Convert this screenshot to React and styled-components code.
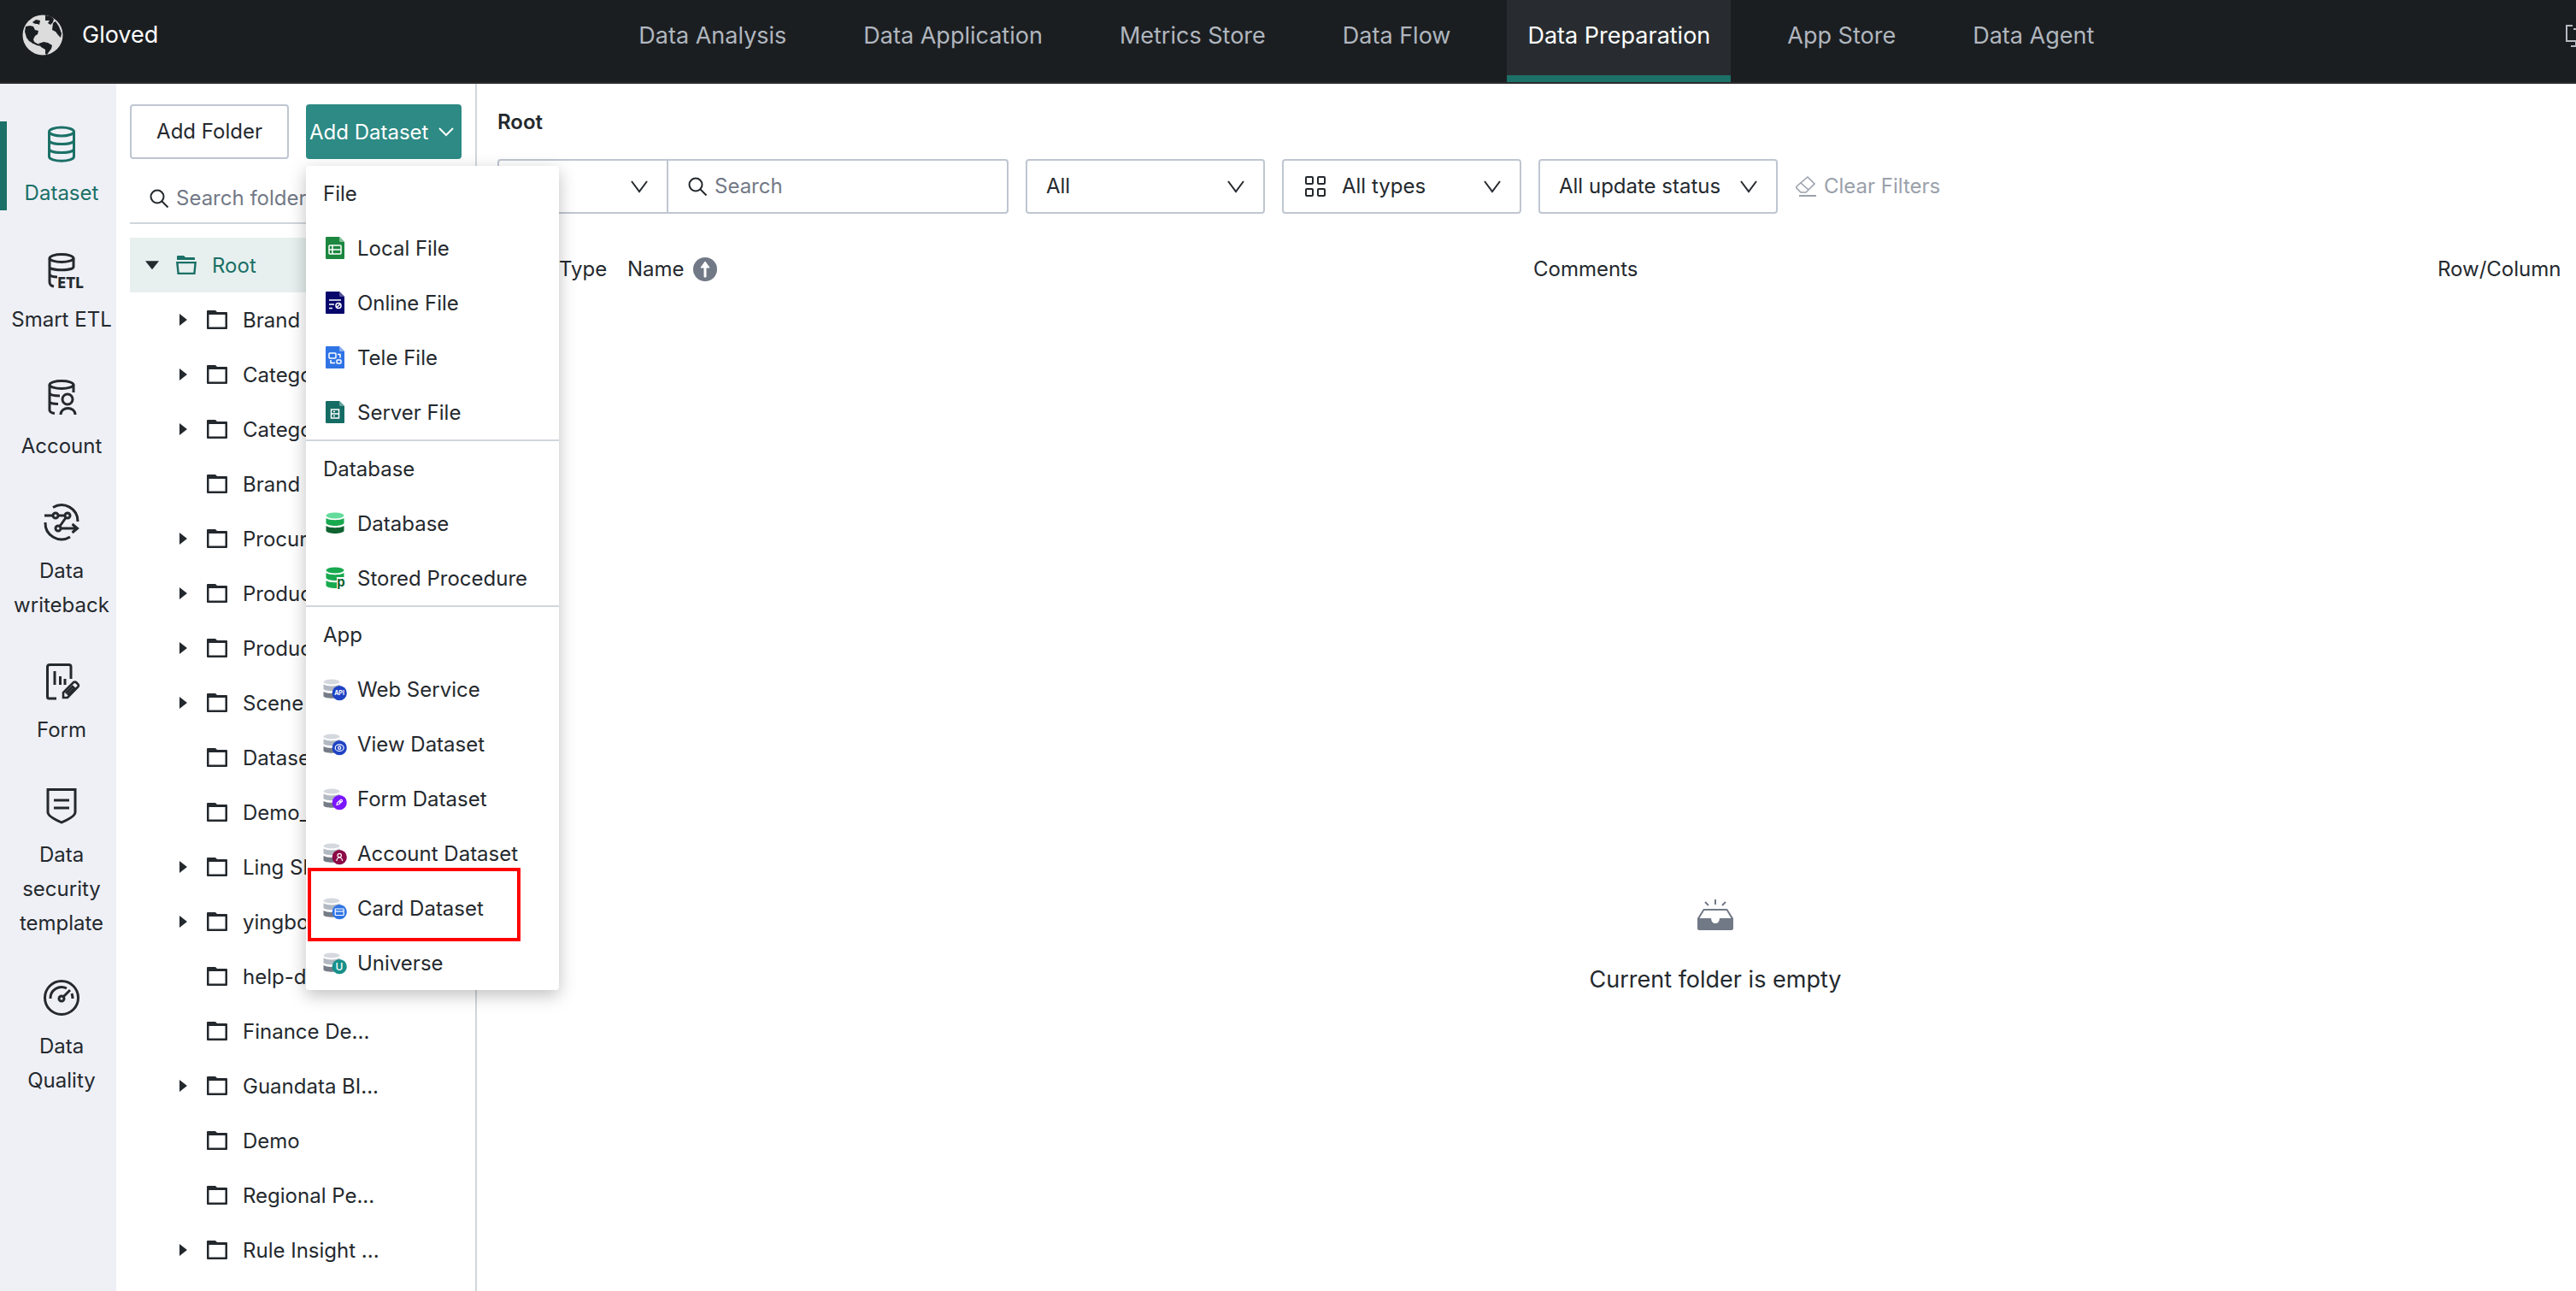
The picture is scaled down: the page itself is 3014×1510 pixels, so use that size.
import styled, { createGlobalStyle, css } from 'styled-components';
import { useState } from 'react';

const tabs = [
  'Data Analysis',
  'Data Application',
  'Metrics Store',
  'Data Flow',
  'Data Preparation',
  'App Store',
  'Data Agent',
];

const folders = [
  { name: 'Brand', open: true },
  { name: 'Category', open: true },
  { name: 'Category', open: true },
  { name: 'Brand' },
  { name: 'Procurement', open: true },
  { name: 'Product', open: true },
  { name: 'Product', open: true },
  { name: 'Scene', open: true },
  { name: 'Dataset' },
  { name: 'Demo_' },
  { name: 'Ling Sh', open: true },
  { name: 'yingbo', open: true },
  { name: 'help-d' },
  { name: 'Finance De...' },
  { name: 'Guandata BI...', open: true },
  { name: 'Demo' },
  { name: 'Regional Pe...' },
  { name: 'Rule Insight ...', open: true },
];

/* ---------- small icons ---------- */

const Chevron = ({ flat }) => (
  <svg width="20" height="20" viewBox="0 0 20 20" fill="none" stroke="currentColor" strokeWidth="2">
    <path d={flat ? 'M2 5l8 8 8-8' : 'M1 4l9 12 9-12'} />
  </svg>
);

const SearchIcon = () => (
  <svg width="24" height="24" viewBox="0 0 24 24" fill="none" stroke="#24292e" strokeWidth="2">
    <circle cx="10" cy="10" r="7.5" />
    <path d="M15.500 15.500l7 7" />
  </svg>
);

const GridIcon = () => (
  <svg width="26" height="26" viewBox="0 0 26 26" fill="none" stroke="#24292e" strokeWidth="2">
    <rect x="2" y="2" width="8" height="8" rx="1" />
    <rect x="16" y="2" width="8" height="8" rx="1" />
    <rect x="2" y="16" width="8" height="8" rx="1" />
    <rect x="16" y="16" width="8" height="8" rx="1" />
  </svg>
);

const EraserIcon = () => (
  <svg width="26" height="26" viewBox="0 0 26 26" fill="none" stroke="currentColor" strokeWidth="1.6">
    <path d="M15 2l8 8-10 10H7l-5-5v-2zM7 9l9 8" />
    <path d="M5 24h20" strokeWidth="2" />
  </svg>
);

const FolderIcon = () => (
  <svg width="24" height="22" viewBox="0 0 24 22">
    <path d="M0 1q0-1 1-1h9l2 2h11q1 0 1 1v18q0 1-1 1H1q-1 0-1-1zM2.500 5v14.500h19V5z" fill="#24292e" fillRule="evenodd" />
  </svg>
);

const FolderOpenIcon = () => (
  <svg width="24" height="22" viewBox="0 0 24 22" fill="#1b7067">
    <path d="M1 1q0-1 1-1h7l2 2h10q1 0 1 1v2H1z" />
    <path d="M0 7h24l-1.500 15h-21zM2.700 9.200l1 10.600h16.600l1-10.600z" fillRule="evenodd" />
  </svg>
);

const GlobeIcon = () => (
  <svg width="48" height="50" viewBox="0 0 48 50">
    <circle cx="24" cy="25" r="23.5" fill="#dcdcdc" />
    <g fill="#1b1e21">
      <path d="M4 15l5-1 4 1 2 4 4 1-1 4-3 2-2 4 1 3 3 2-4 0-5-3-3-4-2-7z" />
      <path d="M12 10l4-3 5 1-1 5-2-1-2 0-3-1z" />
      <path d="M27 2l6 1 4 3-1 4-3 3-3-2 2-3-5 0z" />
      <path d="M36 11l3-2 4 6 3 8-1 5-3-3-3-4-4-2z" />
      <path d="M19 35l6-2 5 1 5 3-1 4-3 4-2 3-2-1 0-5-5-3z" />
      <path d="M11 31l4 3 5 2 1 2-4-1-6-3z" />
    </g>
  </svg>
);

const MonitorIcon = () => (
  <svg width="28" height="28" viewBox="0 0 28 28" fill="none" stroke="#b5bac2" strokeWidth="2">
    <path d="M9 2H2v18h24V2h-7M10 6h8M13 20v6M7 26h14" />
  </svg>
);

const SortIcon = () => (
  <svg width="28" height="28" viewBox="0 0 28 28">
    <circle cx="14" cy="14" r="14" fill="#727986" />
    <path d="M14 5l5 7h-4v11h-2V12H9z" fill="#fff" stroke="#fff" />
  </svg>
);

const EmptyIcon = () => (
  <svg width="42" height="36" viewBox="0 0 42 36" fill="#727986">
    <path d="M7 11h28l7 11v12q0 2-2 2H2q-2 0-2-2V22zM8 13L2.500 22H16q.5 6 5 6t5-6h13.500L34 13z" fillRule="evenodd" />
    <path d="M21 0v6M9 3l4 4M33 3l-4 4" stroke="#727986" strokeWidth="2" />
  </svg>
);

/* ---------- sidebar icons, artwork sits on the bottom edge ---------- */

const SideSvg = ({ height, children }) => (
  <svg
    width="48"
    height={height}
    viewBox={`0 ${44 - height} 48 ${height}`}
    fill="none"
    stroke="currentColor"
    strokeWidth="3"
    overflow="visible"
  >
    {children}
  </svg>
);

const EtlText = styled.text`
  font-family: 'Liberation Sans Narrow', 'DejaVu Sans Condensed', sans-serif;
  font-weight: 700;
  font-size: 17px;
  fill: currentColor;
  stroke: none;
`;

const side = [
  {
    label: 'Dataset',
    icon: (
      <SideSvg height={44}>
        <ellipse cx="24" cy="8" rx="14.5" ry="5" />
        <path d="M9.500 8v29c0 7 29 7 29 0V8M9.500 18c0 6 29 6 29 0M9.500 28c0 6 29 6 29 0" />
      </SideSvg>
    ),
  },
  {
    label: 'Smart ETL',
    icon: (
      <SideSvg height={44}>
        <ellipse cx="24" cy="8" rx="14" ry="4.5" />
        <path d="M10 8v28c0 3 2 4.500 5 5M10 18c0 5 28 5 28 0V8M10 27c1 2 4 3 9 3" />
        <EtlText x="19" y="43">
          ETL
        </EtlText>
      </SideSvg>
    ),
  },
  {
    label: 'Account',
    icon: (
      <SideSvg height={44}>
        <ellipse cx="24" cy="8" rx="14" ry="4.5" />
        <path d="M10 8v30q1 3 6 3.500M38 8v9M10 18c1 2 5 3 12 3M10 28c1 2 5 2.500 10 2.500" />
        <circle cx="31" cy="25" r="6" />
        <path d="M23 43c0-10 17-10 17 0" />
      </SideSvg>
    ),
  },
  {
    label: 'Data writeback',
    icon: (
      <SideSvg height={42}>
        <path d="M14 5.500A19 19 0 0 1 43 22M5 23a19 19 0 0 0 29 17" />
        <circle cx="17" cy="15" r="3" />
        <circle cx="31" cy="15" r="3" />
        <circle cx="20" cy="30" r="3" />
        <path d="M4 15h10M20 15h8M29 17.500L22 27.500M23 30h18M36.500 25l6 5-6 5" />
      </SideSvg>
    ),
  },
  {
    label: 'Form',
    icon: (
      <SideSvg height={42}>
        <path d="M35 20V6q0-2.500-2.500-2.500h-22Q7.500 3.500 7.500 6v35q0 2 2 2H18M16 11v16M22.500 17v10M28 20v7" />
        <path d="M26 42v-6l12-12q2-1 3.500.5l2 2q1 1.500 0 2.500L31 42zM29 37l8-8 2 2-8 8" strokeWidth="2.600" />
      </SideSvg>
    ),
  },
  {
    label: 'Data security template',
    icon: (
      <SideSvg height={42}>
        <path d="M8 3.500h32V30q0 5-16 12Q8 35 8 30zM15 16h18M15 25h18" />
      </SideSvg>
    ),
  },
  {
    label: 'Data Quality',
    icon: (
      <SideSvg height={40}>
        <circle cx="24" cy="23" r="19.5" />
        <circle cx="24" cy="24" r="3" />
        <path d="M11 24a13 13 0 0 1 19-12M26.500 21.500L34 14M36 18q1 3 1 6" />
      </SideSvg>
    ),
  },
];

/* ---------- menu icons ---------- */

const FileIcon = ({ color, fold, children }) => (
  <svg width="28" height="28" viewBox="0 0 28 28">
    <path d="M4 1h15l6 6v19q0 1-1 1H4q-1 0-1-1V2q0-1 1-1z" fill={color} />
    <path d="M19 1l6 6h-5q-1 0-1-1z" fill={fold} />
    <g fill="none" stroke="#fff" strokeWidth="1.5">
      {children}
    </g>
  </svg>
);

const Cylinder = ({ top, middle, bottom }) => (
  <>
    <ellipse cx="14" cy="5" rx="10.5" ry="3.5" fill={top} />
    <path d="M3.500 8c4 3 17 3 21 0v6c-2 4-19 4-21 0z" fill={middle} />
    <path d="M3.500 17c4 3 17 3 21 0v6c-2 4-19 4-21 0z" fill={bottom} />
  </>
);

const AppIcon = ({ color, children }) => (
  <svg width="28" height="28" viewBox="0 0 28 28">
    <ellipse cx="10" cy="5.500" rx="9.5" ry="3" fill="#d5d9df" />
    <path d="M.5 8.500c4 2.500 15 2.500 19 0v5.500c-2 3-17 3-19 0z" fill="#b3b9c2" />
    <path d="M.5 17c4 2.500 15 2.500 19 0v5.500c-2 3-17 3-19 0z" fill="#757c87" />
    <circle cx="19.2" cy="18.7" r="8.6" fill={color} />
    <g fill="none" stroke="#fff" strokeWidth="1.2">
      {children}
    </g>
  </svg>
);

const BadgeText = styled.text`
  font-family: Inter, sans-serif;
  font-weight: ${props => props.$weight || 700};
  font-size: ${props => props.$size || 7}px;
  text-anchor: middle;
  fill: ${props => props.$color || '#fff'};
  stroke: none;
`;

const menu = [
  {
    title: 'File',
    items: [
      {
        label: 'Local File',
        icon: (
          <FileIcon color="#1b873f" fold="#7fbf92">
            <rect x="7" y="11" width="14" height="10" rx="1" />
            <path d="M7 16h14M11 11v10" />
          </FileIcon>
        ),
      },
      {
        label: 'Online File',
        icon: (
          <FileIcon color="#06066b" fold="#55559c">
            <path d="M7 11h14M7 16h6M7 20.500h4" />
            <circle cx="18" cy="17.5" r="3" />
            <path d="M16 19.500l4-4" />
          </FileIcon>
        ),
      },
      {
        label: 'Tele File',
        icon: (
          <FileIcon color="#2f74e5" fold="#86aef0">
            <rect x="7" y="9" width="8" height="6" rx="1" />
            <rect x="16" y="17" width="5" height="4" rx="1" />
            <path d="M17 10.500h3v4M9 17v3.500h5" />
          </FileIcon>
        ),
      },
      {
        label: 'Server File',
        icon: (
          <FileIcon color="#146c64" fold="#5fa39c">
            <rect x="9.5" y="11" width="9" height="10" />
            <path d="M9.500 16h9M12 13.500h2M12 18.500h2" />
          </FileIcon>
        ),
      },
    ],
  },
  {
    title: 'Database',
    items: [
      {
        label: 'Database',
        icon: (
          <svg width="28" height="28" viewBox="0 0 28 28">
            <Cylinder top="#63dc9b" middle="#18a94f" bottom="#0f6330" />
          </svg>
        ),
      },
      {
        label: 'Stored Procedure',
        icon: (
          <svg width="28" height="28" viewBox="0 0 28 28">
            <Cylinder top="#18a94f" middle="#18a94f" bottom="#18a94f" />
            <path d="M16 13h10v15H16z" fill="#fff" />
            <BadgeText x="21" y="24" $size={15} $color="#0f6330">
              p
            </BadgeText>
          </svg>
        ),
      },
    ],
  },
  {
    title: 'App',
    items: [
      {
        label: 'Web Service',
        icon: (
          <AppIcon color="#1f43c4">
            <BadgeText x="19" y="21">API</BadgeText>
          </AppIcon>
        ),
      },
      {
        label: 'View Dataset',
        icon: (
          <AppIcon color="#1f43c4">
            <ellipse cx="19.2" cy="18.7" rx="5" ry="3.8" />
            <circle cx="19.2" cy="18.7" r="1.6" />
          </AppIcon>
        ),
      },
      {
        label: 'Form Dataset',
        icon: (
          <AppIcon color="#7b16ff">
            <path d="M16 21.500l.5-2.500 4-3.500q2-.5 2 1.500l-4 3.800zM19 19l2-2" />
          </AppIcon>
        ),
      },
      {
        label: 'Account Dataset',
        icon: (
          <AppIcon color="#8c0a48">
            <circle cx="19.2" cy="16.5" r="2.2" />
            <path d="M15.800 23q.5-4 3.400-4t3.400 4" />
          </AppIcon>
        ),
      },
      {
        label: 'Card Dataset',
        marked: true,
        icon: (
          <AppIcon color="#2f74e5">
            <rect x="14.2" y="15" width="10" height="7.5" rx=".5" />
            <path d="M14.200 18h10" />
          </AppIcon>
        ),
      },
      {
        label: 'Universe',
        icon: (
          <AppIcon color="#17908a">
            <BadgeText x="19" y="23" $size={12} $weight={500}>
              U
            </BadgeText>
          </AppIcon>
        ),
      },
    ],
  },
];

const App = () => {
  const [activeTab, setActiveTab] = useState('Data Preparation');
  const [menuOpen, setMenuOpen] = useState(true);

  return (
    <Page>
      <GlobalStyle />
      <Header>
        <Brand>
          <GlobeIcon />
          Gloved
        </Brand>
        <Nav>
          {tabs.map(tab => (
            <Tab
              key={tab}
              href="#"
              $active={tab === activeTab}
              onClick={() => setActiveTab(tab)}
            >
              {tab}
            </Tab>
          ))}
        </Nav>
        <HeaderButton aria-label="Screen">
          <MonitorIcon />
        </HeaderButton>
      </Header>
      <Body>
        <Sidebar>
          {side.map((item, i) => (
            <SideLink key={item.label} href="#" $active={i === 0}>
              {item.icon}
              <span>{item.label}</span>
            </SideLink>
          ))}
        </Sidebar>
        <TreePanel>
          <Actions>
            <PlainButton>Add Folder</PlainButton>
            <MenuAnchor>
              <PrimaryButton onClick={() => setMenuOpen(!menuOpen)}>
                Add Dataset
                <Chevron flat />
              </PrimaryButton>
              {menuOpen && (
                <Menu role="menu">
                  {menu.map(group => (
                    <MenuGroup key={group.title}>
                      <MenuTitle>{group.title}</MenuTitle>
                      {group.items.map(item => (
                        <MenuItem key={item.label} role="menuitem" $marked={item.marked}>
                          {item.icon}
                          <span>{item.label}</span>
                        </MenuItem>
                      ))}
                    </MenuGroup>
                  ))}
                </Menu>
              )}
            </MenuAnchor>
          </Actions>
          <FolderSearch>
            <SearchIcon />
            <input type="text" placeholder="Search folder" aria-label="Search folder" />
          </FolderSearch>
          <Tree>
            <TreeRow $root>
              <Caret $down />
              <FolderOpenIcon />
              <span>Root</span>
            </TreeRow>
            {folders.map((folder, i) => (
              <TreeRow key={i}>
                <Caret $hidden={!folder.open} />
                <FolderIcon />
                <span>{folder.name}</span>
              </TreeRow>
            ))}
          </Tree>
        </TreePanel>
        <Main>
          <Title>Root</Title>
          <Filters>
            <SearchGroup>
              <SelectBox $joined>
                <select aria-label="Search by">
                  <option>All</option>
                </select>
                <Chevron />
              </SelectBox>
              <SearchField>
                <SearchIcon />
                <input type="text" placeholder="Search" aria-label="Search" />
              </SearchField>
            </SearchGroup>
            <SelectBox>
              <select aria-label="Owner">
                <option>All</option>
              </select>
              <Chevron />
            </SelectBox>
            <SelectBox $withIcon>
              <GridIcon />
              <select aria-label="Types">
                <option>All types</option>
              </select>
              <Chevron />
            </SelectBox>
            <SelectBox>
              <select aria-label="Update status">
                <option>All update status</option>
              </select>
              <Chevron />
            </SelectBox>
            <ClearButton disabled>
              <EraserIcon />
              Clear Filters
            </ClearButton>
          </Filters>
          <TableScroll>
            <Table>
              <colgroup>
                <col width="72" />
                <col width="80" />
                <col width="1060" />
                <col width="1058" />
                <col width="580" />
              </colgroup>
              <thead>
                <tr>
                  <th />
                  <th>Type</th>
                  <th>
                    <SortButton>
                      Name
                      <SortIcon />
                    </SortButton>
                  </th>
                  <th>Comments</th>
                  <th>Row/Column</th>
                </tr>
              </thead>
              <tbody>
                <tr>
                  <td colSpan={5}>
                    <Empty>
                      <EmptyIcon />
                      Current folder is empty
                    </Empty>
                  </td>
                </tr>
              </tbody>
            </Table>
          </TableScroll>
        </Main>
      </Body>
    </Page>
  );
};

const GlobalStyle = createGlobalStyle`
  *, *::after {
    box-sizing: border-box;
  }
  body {
    margin: 0;
    background: #fff;
    color: #24292e;
    font: 24px/40px Inter, 'Liberation Sans', sans-serif;
  }
  button, input, select {
    font: inherit;
    color: inherit;
    background: none;
    border: 0;
    padding: 0;
    margin: 0;
    outline: none;
  }
  button {
    cursor: pointer;
  }
  a {
    color: inherit;
    text-decoration: none;
  }
  svg {
    flex: none;
  }
  input::placeholder {
    color: #727986;
    opacity: 1;
  }
`;

const Page = styled.div`
  display: flex;
  flex-direction: column;
  min-height: 100vh;
  overflow: hidden;
`;

const Header = styled.header`
  display: flex;
  height: 98px;
  background: #1b1e21;
  border-bottom: 2px solid #2b2b2b;
  font-size: 27px;
`;

const Brand = styled.div`
  display: flex;
  align-items: center;
  gap: 22px;
  width: 24%;
  height: 82px;
  padding-left: 26px;
  color: #fff;
`;

const Nav = styled.nav`
  display: flex;
  gap: 42px;
  flex: 1;
`;

const Tab = styled.a`
  padding: 22px 24px;
  color: #b0b6be;
  border-bottom: 8px solid transparent;
  white-space: nowrap;
  ${props =>
    props.$active &&
    css`
      color: #fff;
      background: #282c30;
      border-color: #1b7067;
    `}
`;

const HeaderButton = styled.button`
  display: flex;
  align-items: center;
  height: 84px;
  margin-right: -15px;
`;

const Body = styled.div`
  display: flex;
  flex: 1;
`;

const Sidebar = styled.aside`
  flex: none;
  width: 136px;
  padding-top: 44px;
  background: #eff0f6;
`;

const SideLink = styled.a`
  display: flex;
  flex-direction: column;
  align-items: center;
  gap: 16px;
  margin-bottom: 44px;
  padding-top: 4px;
  border-left: 8px solid transparent;
  text-align: center;
  ${props =>
    props.$active &&
    css`
      color: #1b7067;
      border-color: #1b7067;
    `}
`;

const TreePanel = styled.section`
  flex: none;
  width: 422px;
  padding: 24px 16px 16px;
  border-right: 2px solid #d0d6dd;
`;

const Actions = styled.div`
  display: flex;
  gap: 20px;
`;

const PlainButton = styled.button`
  width: 186px;
  height: 64px;
  border: 2px solid #bfc6d1;
  border-radius: 4px;
`;

const MenuAnchor = styled.div`
  position: relative;
`;

const PrimaryButton = styled.button`
  display: flex;
  align-items: center;
  justify-content: space-between;
  width: 182px;
  height: 64px;
  padding: 2px 8px 0 4px;
  border-radius: 4px;
  background: #2d8a84;
  color: #fff;
  white-space: nowrap;
`;

const Menu = styled.div`
  position: absolute;
  top: 72px;
  left: 0;
  z-index: 10;
  width: 296px;
  background: #fff;
  border-radius: 4px;
  box-shadow: 0 6px 20px rgba(0, 0, 0, 0.25);
`;

const MenuGroup = styled.div`
  & + & {
    border-top: 2px solid #d0d6dd;
  }
`;

const MenuTitle = styled.div`
  padding: 13px 20px 11px;
`;

const MenuItem = styled.button`
  position: relative;
  display: flex;
  align-items: center;
  gap: 12px;
  width: 100%;
  height: 64px;
  padding: 0 20px;
  white-space: nowrap;
  span {
    padding-top: 2px;
  }
  ${props =>
    props.$marked &&
    css`
      &::after {
        content: '';
        position: absolute;
        top: -15px;
        left: 2px;
        width: 249px;
        height: 86px;
        border: 4px solid #f00;
      }
    `}
`;

const FolderSearch = styled.label`
  display: flex;
  align-items: center;
  gap: 8px;
  height: 64px;
  margin: 12px 0 16px;
  padding: 6px 22px 0;
  border-bottom: 2px solid #d0d6dd;
  input {
    flex: 1;
    min-width: 0;
  }
`;

const Tree = styled.ul`
  margin: 0;
  padding: 0;
  list-style: none;
`;

const TreeRow = styled.li`
  display: flex;
  align-items: center;
  height: 64px;
  padding-left: ${props => (props.$root ? 18 : 56)}px;
  color: ${props => (props.$root ? '#1b7067' : 'inherit')};
  background: ${props => (props.$root ? '#e7f0ef' : 'none')};
  span {
    margin-left: 18px;
    padding-top: 2px;
  }
`;

const Caret = styled.i`
  width: 16px;
  height: 14px;
  margin: ${props => (props.$down ? '0 20px 0 0' : '0 16px 0 2px')};
  background: #24292e;
  clip-path: ${props =>
    props.$down ? 'polygon(0 16%, 100% 16%, 50% 88%)' : 'polygon(0 0, 56% 50%, 0 100%)'};
  visibility: ${props => (props.$hidden ? 'hidden' : 'visible')};
`;

const Main = styled.main`
  flex: 1;
  min-width: 0;
  padding: 24px 0 0 24px;
`;

const Title = styled.h1`
  margin: 0 0 22px;
  font-size: 24px;
  font-weight: 600;
  line-height: 42px;
`;

const Filters = styled.div`
  display: flex;
  align-items: center;
  gap: 20px;
`;

const SearchGroup = styled.div`
  display: flex;
  width: 598px;
  height: 64px;
  border: 2px solid #bfc6d1;
  border-radius: 4px;
`;

const SelectBox = styled.div`
  display: grid;
  flex: none;
  grid-template-columns: 1fr;
  align-items: center;
  width: 280px;
  height: 64px;
  border: 2px solid #bfc6d1;
  border-radius: 4px;
  > * {
    grid-area: 1 / 1;
  }
  select {
    appearance: none;
    width: 100%;
    height: 100%;
    padding-left: ${props => (props.$withIcon ? 68 : 22)}px;
  }
  svg {
    pointer-events: none;
    margin-left: 24px;
  }
  svg:last-child {
    justify-self: end;
    margin-right: 22px;
  }
  ${props =>
    props.$joined &&
    css`
      width: 198px;
      height: 60px;
      border-width: 0 2px 0 0;
      border-radius: 0;
    `}
`;

const SearchField = styled.label`
  display: flex;
  flex: 1;
  align-items: center;
  gap: 8px;
  padding: 0 22px;
  input {
    flex: 1;
    min-width: 0;
  }
`;

const ClearButton = styled.button`
  display: flex;
  align-items: center;
  gap: 8px;
  color: #9aa1ab;
`;

const TableScroll = styled.div`
  overflow: hidden;
`;

const Table = styled.table`
  table-layout: fixed;
  width: 2850px;
  margin-top: 32px;
  border-collapse: collapse;
  th,
  td {
    padding: 0;
    font-weight: 400;
    text-align: left;
  }
  th {
    height: 66px;
  }
`;

const SortButton = styled.button`
  display: flex;
  align-items: center;
  gap: 10px;
`;

const Empty = styled.div`
  display: flex;
  flex-direction: column;
  align-items: center;
  justify-content: flex-end;
  gap: 38px;
  height: calc(100vh - 692px);
  min-height: 200px;
  font-size: 27px;
`;

export default App;
